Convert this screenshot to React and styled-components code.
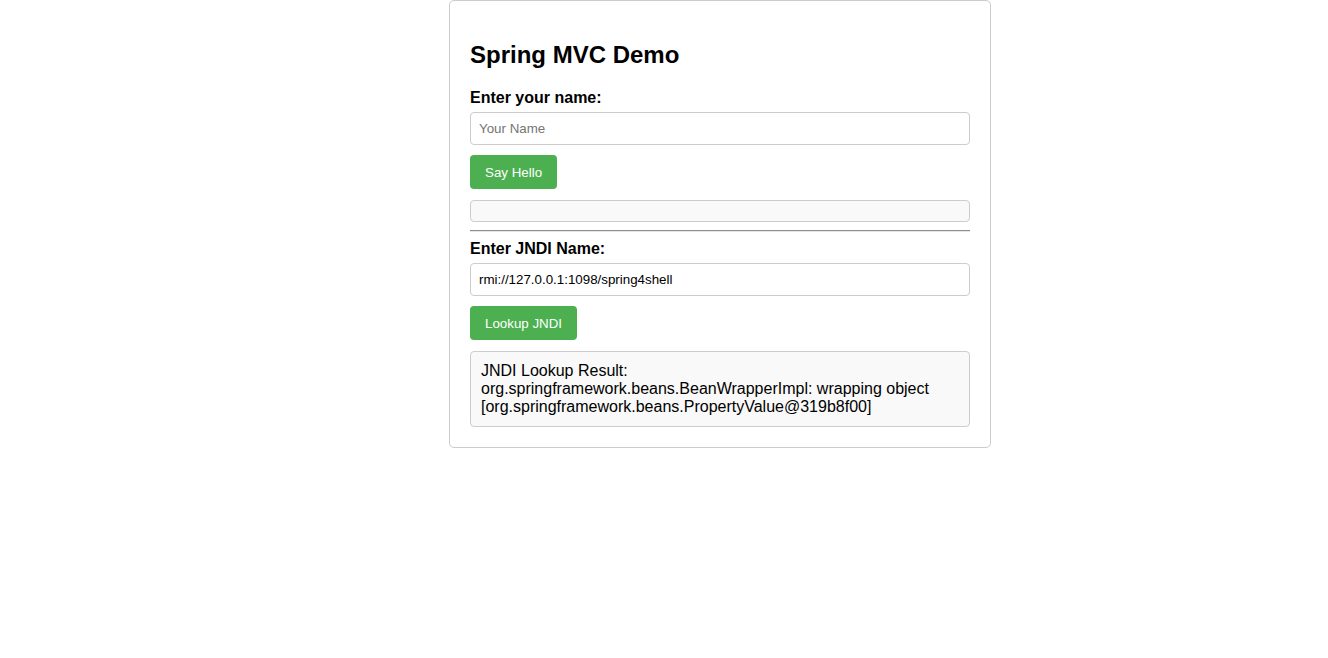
import React from 'react';
import styled, { createGlobalStyle } from 'styled-components';

const GlobalStyle = createGlobalStyle`
  body {
    margin: 0;
    background: #fff;
    font-family: "Liberation Sans", Arial, sans-serif;
    color: #000;
  }
`;

const Page = styled.div`
  padding-left: 449px;
`;

const Card = styled.div`
  width: 500px;
  padding: 0 20px 20px;
  border: 1px solid #ccc;
  border-radius: 5px;
`;

const Title = styled.h2`
  font-size: 24px;
  font-weight: bold;
  margin: 0;
  padding-top: 40px;
  margin-bottom: 20px;
  line-height: 28px;
`;

const Label = styled.label`
  display: block;
  font-size: 16px;
  font-weight: bold;
  line-height: 18px;
  margin-bottom: 5px;
`;

const Input = styled.input`
  display: block;
  width: 100%;
  box-sizing: border-box;
  height: 33px;
  padding: 8px;
  border: 1px solid #ccc;
  border-radius: 4px;
  font-family: "Liberation Sans", Arial, sans-serif;
  font-size: 13.33px;
  color: #000;
  outline: none;

  &::placeholder {
    color: #757575;
  }
`;

const Button = styled.button`
  display: block;
  margin-top: 10px;
  height: 34px;
  padding: 0 15px;
  border: none;
  border-radius: 4px;
  background: #4caf50;
  color: #fff;
  font-family: "Liberation Sans", Arial, sans-serif;
  font-size: 13.33px;
  cursor: pointer;
`;

const Result = styled.div`
  margin-top: 11px;
  padding: 10px;
  border: 1px solid #ccc;
  border-radius: 4px;
  background: #f9f9f9;
  font-size: 16px;
  line-height: 18px;
`;

const Divider = styled.hr`
  margin: 8px 0;
  border: none;
  border-top: 1px solid #8e8e8e;
  border-bottom: 1px solid #e6e6e6;
`;

export default function App() {
  return (
    <Page>
      <GlobalStyle />
      <Card>
        <Title>Spring MVC Demo</Title>
        <Label>Enter your name:</Label>
        <Input placeholder="Your Name" />
        <Button>Say Hello</Button>
        <Result />
        <Divider />
        <Label>Enter JNDI Name:</Label>
        <Input defaultValue="rmi://127.0.0.1:1098/spring4shell" />
        <Button>Lookup JNDI</Button>
        <Result>
          JNDI Lookup Result:
          <br />
          org.springframework.beans.BeanWrapperImpl: wrapping object
          <br />
          [org.springframework.beans.PropertyValue@319b8f00]
        </Result>
      </Card>
    </Page>
  );
}
